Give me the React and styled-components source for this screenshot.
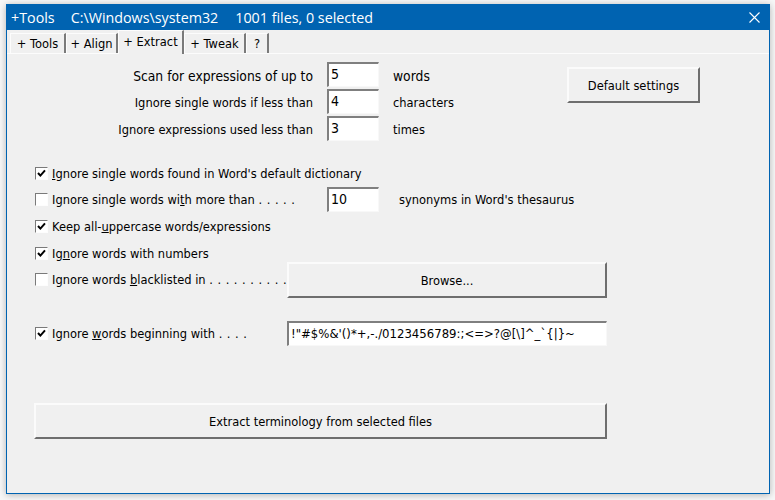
import React from "react";
import styled, { createGlobalStyle } from "styled-components";

const Global = createGlobalStyle`
  html, body { margin: 0; padding: 0; background: #fff; }
  body { width: 775px; height: 500px; overflow: hidden; }
`;

const Page = styled.div`
  width: 775px;
  height: 500px;
  box-sizing: border-box;
  padding: 4px 5px 6px 6px;
  background: #f7f7f7;
`;

const Win = styled.div`
  width: 764px;
  height: 490px;
  box-sizing: border-box;
  background: #f0f0f0;
  border: 1px solid #0063b1;
  box-shadow: 0 1px 7px rgba(0, 0, 0, 0.28);
  display: flex;
  flex-direction: column;
  color: #000;
`;

const TitleBar = styled.div`
  height: 25px;
  flex: none;
  background: #0063b1;
  color: #fff;
  display: flex;
  align-items: center;
  padding-left: 4px;
  font: 14.3px "Open Sans", sans-serif;
`;

const TitlePart = styled.span`
  margin-right: ${(p) => p.$gap}px;
  white-space: nowrap;
`;

const CloseBtn = styled.svg`
  margin-left: auto;
  margin-right: 9px;
  width: 11px;
  height: 11px;
`;

const TabStrip = styled.div`
  height: 23px;
  flex: none;
  display: flex;
  align-items: flex-end;
  padding-left: 3px;
  border-bottom: 1px solid #fcfcfc;
  font: 12.75px "DejaVu Sans Condensed", "DejaVu Sans", sans-serif;
`;

const Tab = styled.div`
  box-sizing: border-box;
  width: ${(p) => p.$w}px;
  height: ${(p) => (p.$active ? 24 : 20)}px;
  margin-bottom: ${(p) => (p.$active ? -1 : 0)}px;
  padding-bottom: ${(p) => (p.$active ? 3 : 0)}px;
  background: #f0f0f0;
  border-top: 1px solid #fcfcfc;
  border-left: 1px solid #fcfcfc;
  border-right: 2px solid #7a7a7a;
  display: flex;
  align-items: center;
  justify-content: center;
  white-space: nowrap;
`;

const Panel = styled.div`
  flex: 1;
  display: flex;
  flex-direction: column;
  padding: 8px 0 0 27px;
  font: 12.75px "DejaVu Sans Condensed", "DejaVu Sans", sans-serif;
`;

const TopArea = styled.div`
  display: flex;
  align-items: flex-start;
`;

const ExprList = styled.div`
  display: flex;
  flex-direction: column;
  gap: 2px;
  width: 533px;
`;

const ExprRow = styled.div`
  display: grid;
  grid-template-columns: 279px 52px auto;
  column-gap: 14px;
  align-items: center;
`;

const ExprLabel = styled.span`
  text-align: right;
  padding-top: 2px;
  font-size: ${(p) => (p.$big ? 13.75 : 12.75)}px;
  white-space: nowrap;
`;

const ExprUnit = styled.span`
  padding-top: 2px;
  font-size: ${(p) => (p.$big ? 13.75 : 12.75)}px;
  white-space: nowrap;
`;

const Field = styled.div`
  box-sizing: border-box;
  width: ${(p) => p.$w}px;
  height: ${(p) => p.$h || 25}px;
  flex: none;
  background: #fff;
  border-style: solid;
  border-width: 2px 1px 1px 2px;
  border-color: #7f7f7f #f8f8f8 #f8f8f8 #7f7f7f;
  padding: 0 0 2px 2px;
  display: flex;
  align-items: center;
  font-size: ${(p) => p.$fs || 14}px;
  white-space: nowrap;
`;

const RaisedButton = styled.div`
  box-sizing: border-box;
  width: ${(p) => p.$w}px;
  height: ${(p) => p.$h}px;
  flex: none;
  border-style: solid;
  border-width: 2px;
  border-color: #fbfbfb #6e6e6e #6e6e6e #fbfbfb;
  margin-top: ${(p) => p.$mt || 0}px;
  display: flex;
  align-items: center;
  justify-content: center;
  white-space: nowrap;
`;

const Options = styled.div`
  display: flex;
  flex-direction: column;
  margin-top: ${(p) => p.$mt}px;
`;

const OptionRow = styled.div`
  display: flex;
  align-items: center;
  height: ${(p) => p.$h || 27}px;
`;

const Box = styled.span`
  box-sizing: border-box;
  width: 13px;
  height: 13px;
  flex: none;
  background: #fff;
  border-style: solid;
  border-width: 1px;
  border-color: #7a7a7a #fdfdfd #fdfdfd #7a7a7a;
  margin-left: 1px;
  margin-right: 4px;
  display: flex;
  align-items: center;
  justify-content: center;
`;

const OptionLabel = styled.span`
  width: ${(p) => p.$w || "auto"};
  flex: none;
  white-space: nowrap;
`;

const Dots = styled.span`
  word-spacing: 0.9px;
`;

const Suffix = styled.span`
  margin-left: 20px;
  white-space: nowrap;
`;

const Check = () => (
  <svg width="9" height="9" viewBox="0 0 9 9">
    <path d="M1 4 L3.4 6.6 L8 1.4" fill="none" stroke="#000" strokeWidth="2" />
  </svg>
);

const Option = ({ checked, children, w, h, after }) => (
  <OptionRow $h={h}>
    <Box>{checked && <Check />}</Box>
    <OptionLabel $w={w}>{children}</OptionLabel>
    {after}
  </OptionRow>
);

export default function App() {
  return (
    <Page>
      <Global />
      <Win>
        <TitleBar>
          <TitlePart $gap={16}>+Tools</TitlePart>
          <TitlePart $gap={17}>C:\Windows\system32</TitlePart>
          <TitlePart $gap={0}>1001 files, 0 selected</TitlePart>
          <CloseBtn viewBox="0 0 11 11">
            <path d="M0.5 0.5 L10.5 10.5 M10.5 0.5 L0.5 10.5" stroke="#fff" strokeWidth="1.1" fill="none" />
          </CloseBtn>
        </TitleBar>
        <TabStrip>
          <Tab $w={56}>+ Tools</Tab>
          <Tab $w={52}>+ Align</Tab>
          <Tab $w={66} $active>+ Extract</Tab>
          <Tab $w={62}>+ Tweak</Tab>
          <Tab $w={23}>?</Tab>
        </TabStrip>
        <Panel>
          <TopArea>
            <ExprList>
              <ExprRow>
                <ExprLabel $big>Scan for expressions of up to</ExprLabel>
                <Field $w={52}>5</Field>
                <ExprUnit $big>words</ExprUnit>
              </ExprRow>
              <ExprRow>
                <ExprLabel>Ignore single words if less than</ExprLabel>
                <Field $w={52}>4</Field>
                <ExprUnit>characters</ExprUnit>
              </ExprRow>
              <ExprRow>
                <ExprLabel>Ignore expressions used less than</ExprLabel>
                <Field $w={52}>3</Field>
                <ExprUnit>times</ExprUnit>
              </ExprRow>
            </ExprList>
            <RaisedButton $w={133} $h={36} $mt={5}>Default settings</RaisedButton>
          </TopArea>
          <Options $mt={19}>
            <Option checked h={26}><u>I</u>gnore single words found in Word's default dictionary</Option>
            <Option
              w="275px"
              after={
                <>
                  <Field $w={52}>10</Field>
                  <Suffix>synonyms in Word's thesaurus</Suffix>
                </>
              }
            >
              Ignore single words wi<u>t</u>h more than <Dots>. . . . .</Dots>
            </Option>
            <Option checked>Keep all-<u>u</u>ppercase words/expressions</Option>
            <Option checked h={26}>Ig<u>n</u>ore words with numbers</Option>
            <Option
              h={26}
              w="235px"
              after={<RaisedButton $w={320} $h={36} $mt={2}>Browse...</RaisedButton>}
            >
              Ignore words <u>b</u>lacklisted in <Dots>. . . . . . . . . .</Dots>
            </Option>
          </Options>
          <Options $mt={28}>
            <Option
              checked
              w="235px"
              after={<Field $w={320} $h={25} $fs={13}>!"#$%&'()*+,-./0123456789:;&lt;=&gt;?@[\]^_`&#123;|&#125;~</Field>}
            >
              Ignore <u>w</u>ords beginning with <Dots>. . . .</Dots>
            </Option>
          </Options>
          <RaisedButton $w={573} $h={36} $mt={56}>Extract terminology from selected files</RaisedButton>
        </Panel>
      </Win>
    </Page>
  );
}
